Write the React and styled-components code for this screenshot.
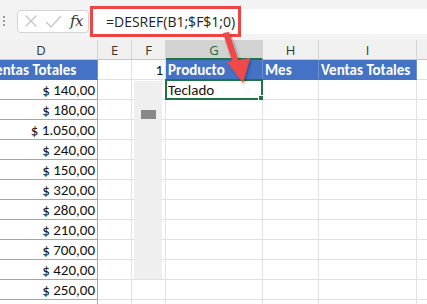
import React from "react";
import styled, { createGlobalStyle } from "styled-components";

const Global = createGlobalStyle`
  html, body { margin: 0; padding: 0; background: #fff; }
  body { width: 427px; height: 304px; overflow: hidden; }
  * { box-sizing: border-box; }
`;

const Page = styled.div`
  position: relative;
  width: 427px;
  height: 304px;
  overflow: hidden;
  background: #fff;
  font-family: Carlito, Lato, "Liberation Sans", sans-serif;
`;

const FormulaBar = styled.div`
  height: 40px;
  background: #f3f3f3;
  display: flex;
  align-items: center;
  padding: 0 0 0 3px;
  gap: 0;
`;

const Handle = styled.div`
  width: 4px;
  display: flex;
  flex-direction: column;
  gap: 2px;
  margin-right: 10px;
  margin-top: 2px;
  span { width: 2px; height: 2px; background: #9a9a9a; display: block; }
`;

const FxBox = styled.div`
  width: 72px;
  height: 23px;
  margin-top: 2px;
  background: #fff;
  border: 1px solid #d4d4d4;
  border-radius: 4px;
  display: flex;
  align-items: center;
  justify-content: space-between;
  padding: 0 5px 0 6px;
`;

const Fx = styled.span`
  font-family: "DejaVu Serif", "Liberation Serif", serif;
  font-style: italic;
  font-size: 15px;
  color: #333;
  letter-spacing: -0.5px;
`;

const FormulaInput = styled.div`
  position: relative;
  flex: 1;
  height: 25px;
  margin-left: 4px;
  margin-top: 2px;
  background: #fff;
  display: flex;
  align-items: center;
  padding-left: 13px;
  font-family: "Open Sans", "Noto Sans", sans-serif;
  font-size: 14px;
  color: #222;
`;

const Highlight = styled.div`
  position: absolute;
  left: -3px;
  top: -3px;
  width: 151px;
  height: 31px;
  border: 3px solid #ee4444;
`;

const Grid = styled.div`
  display: grid;
  grid-template-columns: 113px 34px 34px 97px 56px 98px 40px;
  grid-auto-rows: 20px;
  margin-left: -15px;
  position: relative;
`;

const ColHead = styled.div`
  background: ${p => (p.$active ? "#d2d2d2" : "#f0f0f0")};
  border-right: 1px solid #d4d4d4;
  border-bottom: ${p => (p.$active ? "2px solid #217346" : "1px solid #c8c8c8")};
  display: flex;
  align-items: center;
  justify-content: center;
  font-family: "Open Sans", "Noto Sans", sans-serif;
  font-size: 13px;
  color: ${p => (p.$active ? "#1e6b45" : "#333")};
  padding-top: 1px;
`;

const Cell = styled.div`
  position: relative;
  border-right: 1px solid ${p => (p.$blue ? "#8ea9db" : "#e1e1e1")};
  border-bottom: 1px solid ${p => (p.$blue ? "#8ea9db" : "#e1e1e1")};
  background: ${p => (p.$head ? "#4472c4" : "#fff")};
  color: ${p => (p.$head ? "#fff" : "#111")};
  font-weight: ${p => (p.$head ? 700 : 400)};
  font-size: 15px;
  display: flex;
  align-items: center;
  justify-content: ${p => (p.$right ? "flex-end" : "flex-start")};
  padding: 0 2px 0 2px;
  white-space: nowrap;
  overflow: ${p => (p.$clip ? "hidden" : "visible")};
  line-height: 1;
  padding-top: 1px;
  ${p => p.$head && "border-right-color: #6d8fd0; border-bottom-color: #4472c4;"}
`;

const Selection = styled.div`
  position: absolute;
  left: -1px;
  top: -1px;
  right: -1px;
  bottom: -1px;
  border: 2px solid #217346;
  pointer-events: none;
  &::after {
    content: "";
    position: absolute;
    right: -5px;
    bottom: -5px;
    width: 6px;
    height: 6px;
    background: #217346;
    border: 1px solid #fff;
  }
`;

const ScrollTrack = styled.div`
  position: absolute;
  left: 149px;
  top: 41px;
  width: 28px;
  height: 198px;
  background: #efefef;
`;

const ScrollThumb = styled.div`
  width: 15px;
  height: 9px;
  background: #888;
  margin: 29px 0 0 7px;
`;

const Arrow = styled.svg`
  position: absolute;
  left: 210px;
  top: 28px;
  overflow: visible;
`;

const values = [
  "$ 140,00", "$ 180,00", "$ 1.050,00", "$ 240,00", "$ 150,00", "$ 320,00",
  "$ 280,00", "$ 210,00", "$ 700,00", "$ 420,00", "$ 250,00", "",
];

const cols = ["D", "E", "F", "G", "H", "I", ""];

export default function App() {
  return (
    <Page>
      <Global />
      <FormulaBar>
        <Handle><span /><span /><span /></Handle>
        <FxBox>
          <svg width="14" height="14" viewBox="0 0 14 14">
            <path d="M1.5 1.5 L12.5 12.5 M12.5 1.5 L1.5 12.5" stroke="#c2c2c2" strokeWidth="1.2" fill="none" />
          </svg>
          <svg width="17" height="13" viewBox="0 0 17 13">
            <path d="M1 7 L6 12 L16 1" stroke="#c2c2c2" strokeWidth="1.2" fill="none" />
          </svg>
          <Fx>fx</Fx>
        </FxBox>
        <FormulaInput>
          <Highlight />
          =DESREF(B1;$F$1;0)
        </FormulaInput>
      </FormulaBar>
      <Grid>
        {cols.map((c, i) => (
          <ColHead key={"h" + i} $active={c === "G"}>{c}</ColHead>
        ))}
        <Cell $head $blue $clip>Ventas Totales</Cell>
        <Cell />
        <Cell $right>1</Cell>
        <Cell $head>Producto</Cell>
        <Cell $head>Mes</Cell>
        <Cell $head>Ventas Totales</Cell>
        <Cell />
        {values.map((v, r) => (
          <React.Fragment key={r}>
            <Cell $blue $right>{v}</Cell>
            <Cell />
            <Cell />
            <Cell>
              {r === 0 && "Teclado"}
              {r === 0 && <Selection />}
            </Cell>
            <Cell />
            <Cell />
            <Cell />
          </React.Fragment>
        ))}
        <ScrollTrack>
          <ScrollThumb />
        </ScrollTrack>
      </Grid>
      <Arrow width="50" height="60" viewBox="0 0 50 60">
        <defs>
          <filter id="sh" x="-50%" y="-50%" width="200%" height="200%">
            <feDropShadow dx="1.5" dy="1.5" stdDeviation="1.5" floodColor="#000" floodOpacity="0.3" />
          </filter>
        </defs>
        <g filter="url(#sh)" fill="#f04848" stroke="none">
          <path d="M13 5 L19 4 L29 34 L23 36 Z" />
          <path d="M17 34 L40 30 L33 55 Z" />
        </g>
      </Arrow>
    </Page>
  );
}
